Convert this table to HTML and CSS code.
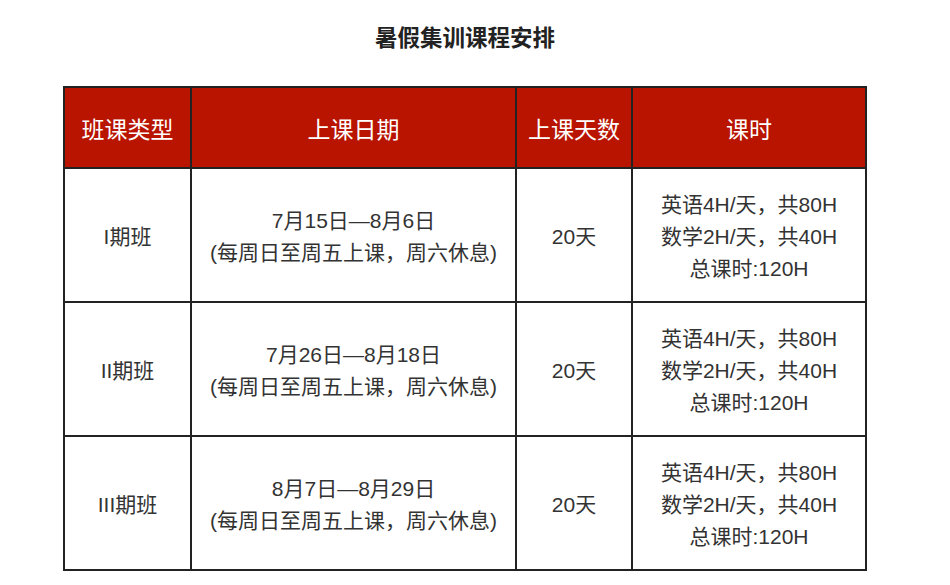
FILE: index.html
```html
<!DOCTYPE html>
<html lang="zh-CN">
<head>
<meta charset="utf-8">
<title>暑假集训课程安排</title>
<link rel="stylesheet" href="styles.css">
</head>
<body>
<div class="page">
  <h1 class="title">暑假集训课程安排</h1>
  <table class="schedule">
    <colgroup>
      <col class="c1"><col class="c2"><col class="c3"><col class="c4">
    </colgroup>
    <thead>
      <tr>
        <th>班课类型</th>
        <th>上课日期</th>
        <th>上课天数</th>
        <th>课时</th>
      </tr>
    </thead>
    <tbody>
      <tr>
        <td>I期班</td>
        <td>7月15日—8月6日<br>(每周日至周五上课，周六休息)</td>
        <td>20天</td>
        <td>英语4H/天，共80H<br>数学2H/天，共40H<br>总课时:120H</td>
      </tr>
      <tr>
        <td>II期班</td>
        <td>7月26日—8月18日<br>(每周日至周五上课，周六休息)</td>
        <td>20天</td>
        <td>英语4H/天，共80H<br>数学2H/天，共40H<br>总课时:120H</td>
      </tr>
      <tr>
        <td>III期班</td>
        <td>8月7日—8月29日<br>(每周日至周五上课，周六休息)</td>
        <td>20天</td>
        <td>英语4H/天，共80H<br>数学2H/天，共40H<br>总课时:120H</td>
      </tr>
    </tbody>
  </table>
</div>
</body>
</html>
```
FILE: styles.css
```css
html, body {
  margin: 0;
  padding: 0;
  background: #ffffff;
}
body {
  font-family: "Liberation Sans", "Noto Sans CJK SC", sans-serif;
  color: #333333;
}
.page {
  width: 930px;
  padding-top: 24px;
}
.title {
  margin: 0;
  height: 30px;
  line-height: 30px;
  font-size: 22.5px;
  font-weight: bold;
  color: #222222;
  text-align: center;
}
.schedule {
  margin: 32px auto 0;
  width: 802px;
  table-layout: fixed;
  border-collapse: collapse;
  border: 2px solid #222222;
}
.c1 { width: 127px; }
.c2 { width: 325px; }
.c3 { width: 116px; }
.c4 { width: 234px; }
.schedule th,
.schedule td {
  border: 2px solid #222222;
  text-align: center;
  vertical-align: middle;
  padding: 0;
}
.schedule th {
  height: 79px;
  background: #b81400;
  color: #ffffff;
  font-size: 23px;
  font-weight: normal;
}
.schedule td {
  height: 134px;
  font-size: 21px;
  line-height: 32px;
  padding-top: 4px;
  box-sizing: border-box;
}
```
